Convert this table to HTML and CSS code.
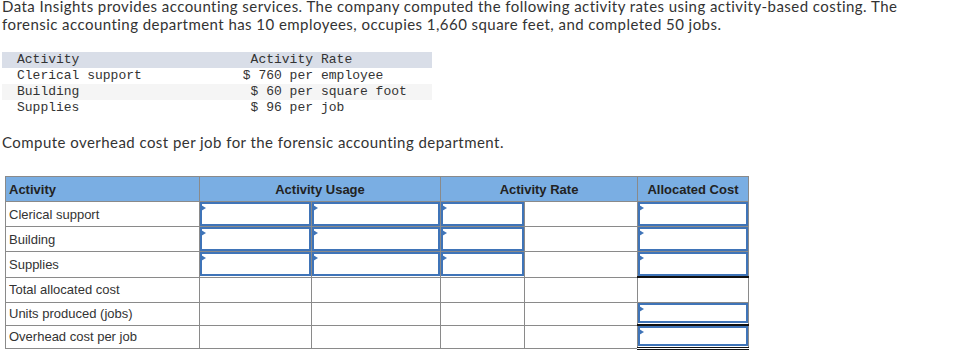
FILE: index.html
```html
<!DOCTYPE html>
<html lang="en">
<head>
<meta charset="utf-8">
<title>Activity-based costing</title>
<link rel="stylesheet" href="styles.css">
</head>
<body>
<div class="page">
  <p class="intro">Data Insights provides accounting services. The company computed the following activity rates using activity-based costing. The forensic accounting department has 10 employees, occupies 1,660 square feet, and completed 50 jobs.</p>

  <div class="rates">
    <div class="rrow head"><span class="c1">Activity</span><span class="c2">Activity</span><span class="c3">Rate</span></div>
    <div class="rrow"><span class="c1">Clerical support</span><span class="c2">$ 760 per</span><span class="c3">employee</span></div>
    <div class="rrow alt"><span class="c1">Building</span><span class="c2">$ 60 per</span><span class="c3">square foot</span></div>
    <div class="rrow"><span class="c1">Supplies</span><span class="c2">$ 96 per</span><span class="c3">job</span></div>
  </div>

  <p class="prompt">Compute overhead cost per job for the forensic accounting department.</p>

  <table class="work">
    <colgroup>
      <col class="w1"><col class="w2"><col class="w3"><col class="w4"><col class="w5"><col class="w6">
    </colgroup>
    <thead>
      <tr class="hrow">
        <th class="left">Activity</th>
        <th colspan="2">Activity Usage</th>
        <th colspan="2">Activity Rate</th>
        <th>Allocated Cost</th>
      </tr>
    </thead>
    <tbody>
      <tr class="brow">
        <td class="label">Clerical support</td>
        <td class="in"><div class="field"></div></td>
        <td class="in"><div class="field"></div></td>
        <td class="in"><div class="field"></div></td>
        <td></td>
        <td class="in"><div class="field"></div></td>
      </tr>
      <tr class="brow">
        <td class="label">Building</td>
        <td class="in"><div class="field"></div></td>
        <td class="in"><div class="field"></div></td>
        <td class="in"><div class="field"></div></td>
        <td></td>
        <td class="in"><div class="field"></div></td>
      </tr>
      <tr class="brow">
        <td class="label">Supplies</td>
        <td class="in"><div class="field"></div></td>
        <td class="in"><div class="field"></div></td>
        <td class="in"><div class="field"></div></td>
        <td></td>
        <td class="in sum-line"><div class="field"></div></td>
      </tr>
      <tr class="brow">
        <td class="label">Total allocated cost</td>
        <td></td><td></td><td></td><td></td>
        <td class="sum-top"></td>
      </tr>
      <tr class="srow">
        <td class="label">Units produced (jobs)</td>
        <td></td><td></td><td></td><td></td>
        <td class="in sum-line"><div class="field short"></div></td>
      </tr>
      <tr class="srow">
        <td class="label">Overhead cost per job</td>
        <td></td><td></td><td></td><td></td>
        <td class="in double"><div class="field short"></div></td>
      </tr>
    </tbody>
  </table>
</div>
</body>
</html>
```

FILE: styles.css
```css
html, body {
  margin: 0;
  padding: 0;
  background: #ffffff;
}

.page {
  padding: 0 2px;
  color: #333333;
}

.intro {
  margin: -3px 0 0 0;
  width: 920px;
  font-family: Lato, "Open Sans", sans-serif;
  font-size: 15px;
  line-height: 18px;
  letter-spacing: 0.45px;
}

.rates {
  margin-top: 19px;
  width: 430px;
  font-family: "Liberation Mono", "DejaVu Sans Mono", monospace;
  font-size: 13px;
  line-height: 16px;
  color: #333333;
}

.rrow {
  display: grid;
  grid-template-columns: 160px 151px 119px;
  height: 16px;
  white-space: pre;
}

.rrow.head {
  background: #d9dee8;
}

.rrow.alt {
  background: #f5f5f5;
}

.rrow .c1 {
  padding-left: 15px;
}

.rrow .c2 {
  text-align: right;
}

.rrow .c3 {
  padding-left: 8px;
}

.prompt {
  margin: 17px 0 0 0;
  font-family: Lato, "Open Sans", sans-serif;
  font-size: 15px;
  line-height: 18px;
  letter-spacing: 0.45px;
}

.work {
  margin: 25px 0 0 3px;
  border-collapse: collapse;
  table-layout: fixed;
  width: 744px;
  font-family: "Liberation Sans", Arial, sans-serif;
  font-size: 13px;
  color: #333333;
}

.w1 { width: 194px; }
.w2 { width: 112px; }
.w3 { width: 129px; }
.w4 { width: 84px; }
.w5 { width: 113px; }
.w6 { width: 111px; }

.work th,
.work td {
  border: 1px solid #8a8a8a;
  padding: 0;
  vertical-align: middle;
}

.work th {
  background: #7aaee3;
  color: #222222;
  font-weight: bold;
  text-align: center;
}

.work th.left {
  text-align: left;
  padding-left: 3px;
}

.hrow { height: 25px; }
.brow { height: 25px; }
.srow { height: 23px; }

.work td.label {
  padding-left: 3px;
}

.work td.in {
  padding: 0;
  vertical-align: top;
}

.field {
  position: relative;
  box-sizing: border-box;
  height: 24px;
  border: 2px solid #3f74b8;
  background: #ffffff;
}

.field.short {
  height: 20px;
}

.field::before {
  content: "";
  position: absolute;
  left: -1px;
  top: 1px;
  width: 0;
  height: 0;
  border-left: 5px solid #3f74b8;
  border-top: 3px solid transparent;
  border-bottom: 3px solid transparent;
}

.work td.sum-line {
  border-bottom: 2px solid #111111;
}

.work td.sum-top {
  border-top: 2px solid #111111;
}

.work td.double {
  border-bottom: 3px double #111111;
}
```
